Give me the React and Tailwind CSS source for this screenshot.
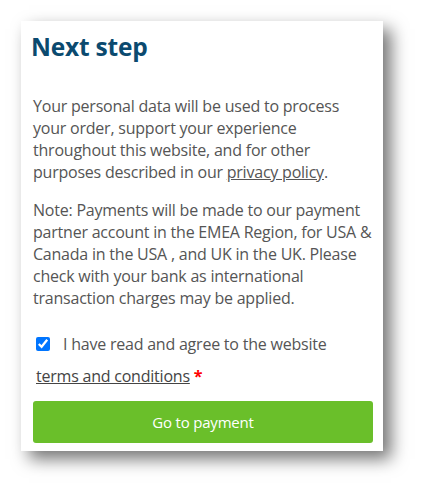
import React from 'react';

export default function App() {
  return (
    <div className="min-h-[493px] w-[425px] bg-white pt-[21px] pl-[21px]" style={{ fontFamily: '"Open Sans", sans-serif' }}>
      <div className="w-[362px] bg-white pt-[11px] pl-[12px] pr-[10px] pb-[8px] shadow-[8px_8px_16px_rgba(0,0,0,0.55)]">
        <h2 className="-ml-[2px] text-[24.5px] leading-[29px] font-bold text-[#0b4a6f] tracking-[-0.2px]">Next step</h2>

        <div className="mt-[34px] text-[16px] leading-[22px] tracking-[-0.22px] text-[#555555]">
          <p>
            Your personal data will be used to process your order, support your experience throughout this website, and for other purposes described in our{' '}
            <a className="underline text-[#555555]">privacy policy</a>.
          </p>
          <p className="mt-[16px]">
            Note: Payments will be made to our payment partner account in the EMEA Region, for USA &amp; Canada in the USA , and UK in the UK. Please check with your bank as international transaction charges may be applied.
          </p>
        </div>

        <label className="mt-[19px] block pl-[3px] text-[16px] leading-[32px] tracking-[-0.22px] text-[#555555]">
          <input type="checkbox" defaultChecked className="mr-[13px] h-[14px] w-[14px] align-[-1px] accent-[#0075ff]" />
          I have read and agree to the website{' '}
          <span className="whitespace-nowrap">
            <a className="underline text-[#444444]">terms and conditions</a>{' '}
            <span className="font-bold text-[#ff0000]">*</span>
          </span>
        </label>

        <button className="mt-[9px] h-[42px] w-full rounded-[3px] bg-[#6abf2a] text-[15px] tracking-[-0.2px] text-white">
          Go to payment
        </button>
      </div>
    </div>
  );
}
